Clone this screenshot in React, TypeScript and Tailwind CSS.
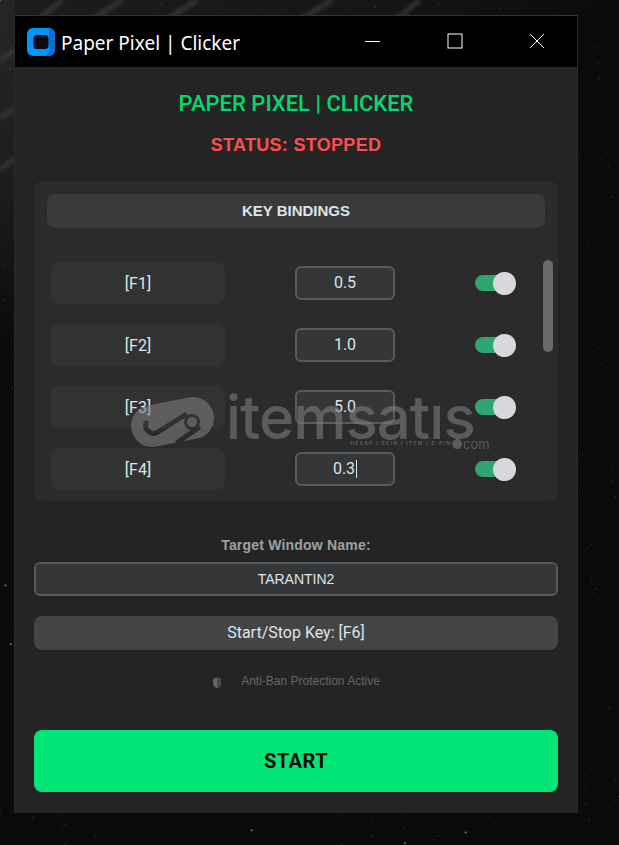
const rows = [
  { key: '[F1]', value: '0.5' },
  { key: '[F2]', value: '1.0' },
  { key: '[F3]', value: '5.0' },
  { key: '[F4]', value: '0.3', caret: true },
]

// speckle texture behind the window
const specks = Array.from({ length: 1100 }, (_, i) => ({
  x: (i * 137.3) % 619,
  y: (i * 89.7 + (i % 17) * 31) % 845,
  r: i % 31 === 0 ? 1 : 0.6,
  o: i % 31 === 0 ? 0.45 : 0.05 + ((i * 7) % 10) / 45,
}))

function Backdrop() {
  return (
    <svg className="absolute inset-0" width="619" height="845">
      <defs>
        <linearGradient id="left-fade" x1="0" y1="0" x2="0" y2="1">
          <stop offset="0" stopColor="#262626" />
          <stop offset="0.55" stopColor="#1c1c1c" />
          <stop offset="1" stopColor="#0a0a0a" />
        </linearGradient>
        <linearGradient id="top-fade" x1="0" y1="0" x2="1" y2="0">
          <stop offset="0" stopColor="#1c1c1c" />
          <stop offset="0.6" stopColor="#161616" />
          <stop offset="1" stopColor="#0a0a0a" />
        </linearGradient>
        <filter id="soft">
          <feGaussianBlur stdDeviation="2" />
        </filter>
      </defs>
      <rect width="619" height="845" fill="#0a0a0a" />
      <rect width="619" height="16" fill="url(#top-fade)" />
      <rect width="15" height="350" fill="url(#left-fade)" />
      <g stroke="#3a3a3a" strokeWidth="4" filter="url(#soft)">
        <path d="M38 20L62 0M92 20L122 0M165 20L198 0M300 20L332 0M395 20L420 0M0 60L15 50M0 118L15 108M0 170L15 158" />
      </g>
      {specks.map((s, i) => (
        <circle key={i} cx={s.x} cy={s.y} r={s.r} fill="#fff" opacity={s.o} />
      ))}
    </svg>
  )
}

function AppLogo() {
  return (
    <svg width="28" height="28" viewBox="0 0 28 28" className="shrink-0">
      <rect width="28" height="28" rx="6" fill="#0095ff" />
      <path d="M22 0a6 6 0 0 1 6 6v16a6 6 0 0 1-6 6h-6a6 6 0 0 0 6-6z" fill="#0a6fd0" />
      <rect x="6.500" y="7" width="15" height="14" rx="3.500" fill="#0b0b10" />
    </svg>
  )
}

function Toggle() {
  return (
    <div className="relative h-[16px] w-[36px] rounded-full bg-[#2fa56f]">
      <div className="absolute right-[-5px] top-[-3.500px] h-[23px] w-[23px] rounded-full bg-[#d6d8dd]" />
    </div>
  )
}

function Watermark() {
  return (
    <div className="pointer-events-none absolute left-[130px] top-[392px] flex items-start gap-[10px] text-[#7c7c7c] opacity-60">
      <svg width="86" height="56" viewBox="0 0 86 56" className="mt-[5px]">
        <mask id="link-cut">
          <path d="M22 29L63 21" stroke="#fff" strokeWidth="42" strokeLinecap="round" />
          <circle cx="62" cy="25" r="8" fill="#000" />
          <path d="M16 26A8 8 0 0 0 28 35L55 18M68 31L48 45" fill="none" stroke="#000" strokeWidth="5" strokeLinecap="round" />
          <circle cx="62" cy="25" r="5" fill="#fff" />
        </mask>
        <rect width="86" height="56" fill="#7c7c7c" mask="url(#link-cut)" />
      </svg>
      <div className="flex flex-col font-['Inter',sans-serif]">
        <span className="text-[60px] leading-[50px] font-medium tracking-[-1px]">itemsatıs</span>
        <div className="mr-[-15px] mt-[-4px] flex items-center justify-end">
          <span className="text-[5px] font-bold tracking-[1.200px]">HESAP / SKIN / ITEM / E-PIN</span>
          <span className="text-[13px] leading-[12px]">●com</span>
        </div>
      </div>
    </div>
  )
}

export default function App() {
  return (
    <div className="relative h-[845px] w-[619px] overflow-hidden bg-[#0a0a0a]">
      <Backdrop />

      <div className="relative ml-[14px] mt-[15px] h-[798px] w-[564px] border-x border-t border-x-[#2b2b2b] border-t-[#333333] bg-[#242424]">
        {/* title bar */}
        <div className="flex h-[51px] items-center bg-black pl-[12px]">
          <AppLogo />
          <span className="ml-[6px] pt-[3px] text-[19px] leading-none text-white font-['Noto_Sans',sans-serif]">
            Paper Pixel | Clicker
          </span>
          <div className="ml-auto flex h-full items-center pb-[2px]">
            <svg width="16" height="16" viewBox="0 0 16 16" className="mr-[66px]">
              <path d="M0 8.500h15" stroke="#fff" strokeWidth="1" />
            </svg>
            <svg width="16" height="16" viewBox="0 0 16 16" className="mr-[66px]">
              <rect x="1" y="1" width="14" height="14" fill="none" stroke="#fff" strokeWidth="1" />
            </svg>
            <svg width="16" height="16" viewBox="0 0 16 16" className="mr-[32px]">
              <path d="M1 1l14 14M15 1L1 15" stroke="#fff" strokeWidth="1" />
            </svg>
          </div>
        </div>

        <div className="flex flex-col px-[19px] font-['Roboto',sans-serif]">
          <h1 className="mt-[22px] text-center text-[22px] leading-[30px] font-medium text-[#00d96f]">
            PAPER PIXEL | CLICKER
          </h1>
          <p className="mt-[14px] text-center text-[18px] leading-[24px] font-bold tracking-[0.3px] text-[#ff4d4d] font-['Liberation_Sans',sans-serif]">
            STATUS: STOPPED
          </p>

          {/* key bindings card */}
          <div className="mt-[24px] h-[320px] rounded-[8px] bg-[#2b2b2b] px-[13px] pt-[13px]">
            <div className="flex h-[34px] items-center justify-center rounded-[8px] bg-[#3a3a3a] text-[15px] font-bold text-[#dce4ee] font-['Liberation_Sans',sans-serif]">
              KEY BINDINGS
            </div>
            <div className="mr-[-8px] mt-[34px] flex">
              <div className="flex w-[482px] flex-col gap-[20px] pl-[4px]">
                {rows.map(row => (
                  <div key={row.key} className="flex h-[42px] items-center">
                    <div className="flex h-[42px] w-[174px] items-center justify-center rounded-[8px] bg-[#323232] pt-[1px] text-[16px] text-[#dce4ee]">
                      {row.key}
                    </div>
                    <div className="ml-[70px] flex h-[34px] w-[100px] items-center justify-center rounded-[6px] border-2 border-[#565b5e] bg-[#343638] text-[16px] text-[#dce4ee]">
                      {row.value}
                      {row.caret && <span className="ml-[1px] h-[18px] w-[1px] bg-[#dce4ee]" />}
                    </div>
                    <div className="ml-[80px]">
                      <Toggle />
                    </div>
                  </div>
                ))}
              </div>
              <div className="ml-[14px] mt-[-2px] h-[92px] w-[10px] rounded-full bg-[#6a6a6a]" />
            </div>
          </div>

          <label className="mt-[36px] text-center text-[14px] leading-[16px] font-bold tracking-[0.2px] text-[#a0a0a0] font-['Liberation_Sans',sans-serif]">
            Target Window Name:
          </label>
          <div className="mt-[9px] flex h-[34px] items-center justify-center rounded-[6px] border-2 border-[#565b5e] bg-[#343638] text-[14px] text-[#dce4ee] font-['Liberation_Sans',sans-serif]">
            TARANTIN2
          </div>
          <div className="mt-[20px] flex h-[34px] items-center justify-center rounded-[8px] bg-[#444444] text-[16px] text-[#dce4ee]">
            Start/Stop Key: [F6]
          </div>

          <div className="mt-[24px] flex h-[14px] items-center justify-center text-[12px] text-[#666666] font-['Liberation_Sans',sans-serif]">
            <svg width="10" height="12" viewBox="0 0 10 12" className="mr-[19px] mt-[3px]">
              <path d="M5 .5l4 1.500v4c0 2.500-1.800 4.300-4 5.500C2.800 10.300 1 8.500 1 6V2z" fill="#666666" />
              <path d="M5 .5l4 1.500v4c0 2.500-1.800 4.300-4 5.500z" fill="#4a4a4a" />
            </svg>
            Anti-Ban Protection Active
          </div>

          <button className="mt-[42px] flex h-[62px] items-center justify-center rounded-[8px] bg-[#00e676] text-[20px] font-bold tracking-[0.5px] text-[#0a0a0a]">
            START
          </button>
        </div>
      </div>

      <Watermark />
    </div>
  )
}
